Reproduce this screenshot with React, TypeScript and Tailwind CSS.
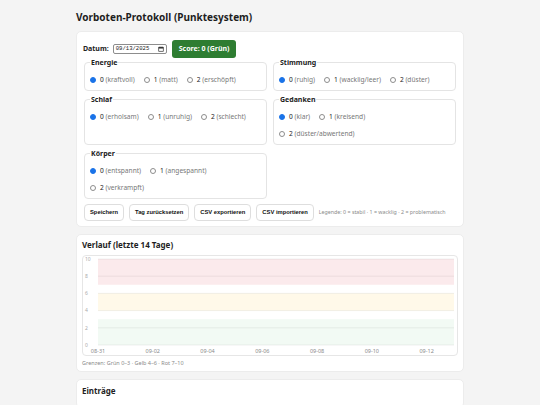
import React from "react";

type Opt = { v: string; l: string };

const Radio = ({ checked }: { checked: boolean }) =>
  checked ? (
    <span className="w-[6px] h-[6px] rounded-full bg-[#1a73e8] border border-[#1a73e8] flex items-center justify-center shrink-0">
      <span className="w-[2px] h-[2px] rounded-full bg-[#1a73e8]" />
    </span>
  ) : (
    <span className="w-[6px] h-[6px] rounded-full border border-[#8d8d8d] bg-white shrink-0" />
  );

const Group = ({ title, opts }: { title: string; opts: Opt[] }) => (
  <fieldset className="border border-[#e4e4e4] rounded-[4px] pl-[5px] pr-[12px] pt-[4px] pb-[2px] min-w-0">
    <legend className="px-[1px] font-bold text-[7px] leading-[9px] text-[#222]">{title}</legend>
    <div className="flex flex-wrap gap-x-[9px]">
      {opts.map((o, i) => (
        <label key={o.v} className="flex items-center h-[17px] gap-[4px] text-[6.6px] whitespace-nowrap">
          <Radio checked={i === 0} />
          <span>
            <span className="text-[#222]">{o.v}</span>{" "}
            <span className="text-[#777]">{o.l}</span>
          </span>
        </label>
      ))}
    </div>
  </fieldset>
);

const Btn = ({ children }: { children: React.ReactNode }) => (
  <button className="h-[17px] px-[5px] bg-white border border-[#dedede] rounded-[4px] text-[5.8px] font-bold text-[#111] [font-family:'Liberation_Sans',Arial,sans-serif] whitespace-nowrap">
    {children}
  </button>
);

const Chart = () => {
  const x0 = 15;
  const x1 = 371;
  const yv = (v: number) => 3 + (10 - v) * 8.6;
  const days = 14;
  const step = (x1 - x0) / (days - 1);
  const labels = ["08-31", "09-02", "09-04", "09-06", "09-08", "09-10", "09-12"];
  return (
    <svg width="375" height="99" viewBox="0 0 375 99" className="block">
      {[0, 2, 4, 6, 8, 10].map((v) => (
        <line key={v} x1={x0} x2={x1} y1={yv(v)} y2={yv(v)} stroke="#ececec" strokeWidth="0.8" />
      ))}
      <rect x={x0} y={yv(10)} width={x1 - x0} height={yv(7) - yv(10)} fill="rgba(220,53,69,0.1)" />
      <rect x={x0} y={yv(6)} width={x1 - x0} height={yv(4) - yv(6)} fill="rgba(255,193,7,0.09)" />
      <rect x={x0} y={yv(3)} width={x1 - x0} height={yv(0) - yv(3)} fill="rgba(40,167,69,0.06)" />
      {[0, 2, 4, 6, 8, 10].map((v) => (
        <text key={v} x={2} y={yv(v) + 1.8} fontSize="5" fill="#aaaaaa" fontFamily="Noto Sans, sans-serif">
          {v}
        </text>
      ))}
      {labels.map((l, i) => (
        <text
          key={l}
          x={x0 + i * 2 * step}
          y={97}
          fontSize="5.5"
          fill="#8a8a8a"
          textAnchor="middle"
          fontFamily="Noto Sans, sans-serif"
        >
          {l}
        </text>
      ))}
    </svg>
  );
};

export default function App() {
  return (
    <div className="min-h-[405px] bg-[#f4f4f4] [font-family:'Noto_Sans',sans-serif] text-[#222]">
      <div className="w-[388px] mx-auto pt-[10px]">
        <h1 className="text-[10px] leading-[14px] font-bold text-[#1e1e1e] mb-[7px]">Vorboten-Protokoll (Punktesystem)</h1>

        <div className="bg-white border border-[#ececec] rounded-[5px] px-[6px] pt-[8px] pb-[5px]">
          <div className="flex items-center gap-[4px]">
            <span className="text-[7px] font-bold">Datum:</span>
            <span className="flex items-center h-[10px] w-[54px] border border-[#8d8d8d] rounded-[2px] px-[2px] justify-between">
              <span className="text-[5.6px] [font-family:'Liberation_Mono',monospace] text-[#222]">09/13/2025</span>
              <svg width="6" height="6" viewBox="0 0 12 12">
                <rect x="1.5" y="2.5" width="9" height="8" fill="none" stroke="#222" strokeWidth="1.3" />
                <rect x="1.5" y="2.5" width="9" height="2.5" fill="#222" />
                <line x1="4" y1="1" x2="4" y2="3" stroke="#222" strokeWidth="1.3" />
                <line x1="8" y1="1" x2="8" y2="3" stroke="#222" strokeWidth="1.3" />
              </svg>
            </span>
            <span className="h-[18px] px-[7px] ml-[1px] flex items-center rounded-[3px] bg-[#2e7d32] text-white text-[7px] font-bold">
              Score: 0 (Grün)
            </span>
          </div>

          <div className="grid grid-cols-2 gap-x-[6px] gap-y-[4px] px-[1px]">
            <Group title="Energie" opts={[{ v: "0", l: "(kraftvoll)" }, { v: "1", l: "(matt)" }, { v: "2", l: "(erschöpft)" }]} />
            <Group title="Stimmung" opts={[{ v: "0", l: "(ruhig)" }, { v: "1", l: "(wacklig/leer)" }, { v: "2", l: "(düster)" }]} />
            <Group title="Schlaf" opts={[{ v: "0", l: "(erholsam)" }, { v: "1", l: "(unruhig)" }, { v: "2", l: "(schlecht)" }]} />
            <Group title="Gedanken" opts={[{ v: "0", l: "(klar)" }, { v: "1", l: "(kreisend)" }, { v: "2", l: "(düster/abwertend)" }]} />
            <Group title="Körper" opts={[{ v: "0", l: "(entspannt)" }, { v: "1", l: "(angespannt)" }, { v: "2", l: "(verkrampft)" }]} />
          </div>

          <div className="flex items-center gap-[5px] mt-[5px] px-[1px]">
            <Btn>Speichern</Btn>
            <Btn>Tag zurücksetzen</Btn>
            <Btn>CSV exportieren</Btn>
            <Btn>CSV importieren</Btn>
            <span className="text-[5.3px] text-[#8a8a8a]">Legende: 0 = stabil · 1 = wacklig · 2 = problematisch</span>
          </div>
        </div>

        <div className="bg-white border border-[#ececec] rounded-[5px] px-[5px] pt-[4px] pb-[4px] mt-[7px]">
          <h2 className="text-[8px] leading-[12px] font-bold text-[#1e1e1e] mb-[4px]">Verlauf (letzte 14 Tage)</h2>
          <div className="border border-[#e6e6e6] rounded-[4px] bg-white">
            <Chart />
          </div>
          <div className="text-[5.5px] text-[#8a8a8a] mt-[3px]">Grenzen: Grün 0–3 · Gelb 4–6 · Rot 7–10</div>
        </div>

        <div className="bg-white border border-[#ececec] rounded-[5px] px-[5px] pt-[5px] pb-[10px] mt-[7px]">
          <h2 className="text-[8px] leading-[12px] font-bold text-[#1e1e1e]">Einträge</h2>
        </div>
      </div>
    </div>
  );
}
